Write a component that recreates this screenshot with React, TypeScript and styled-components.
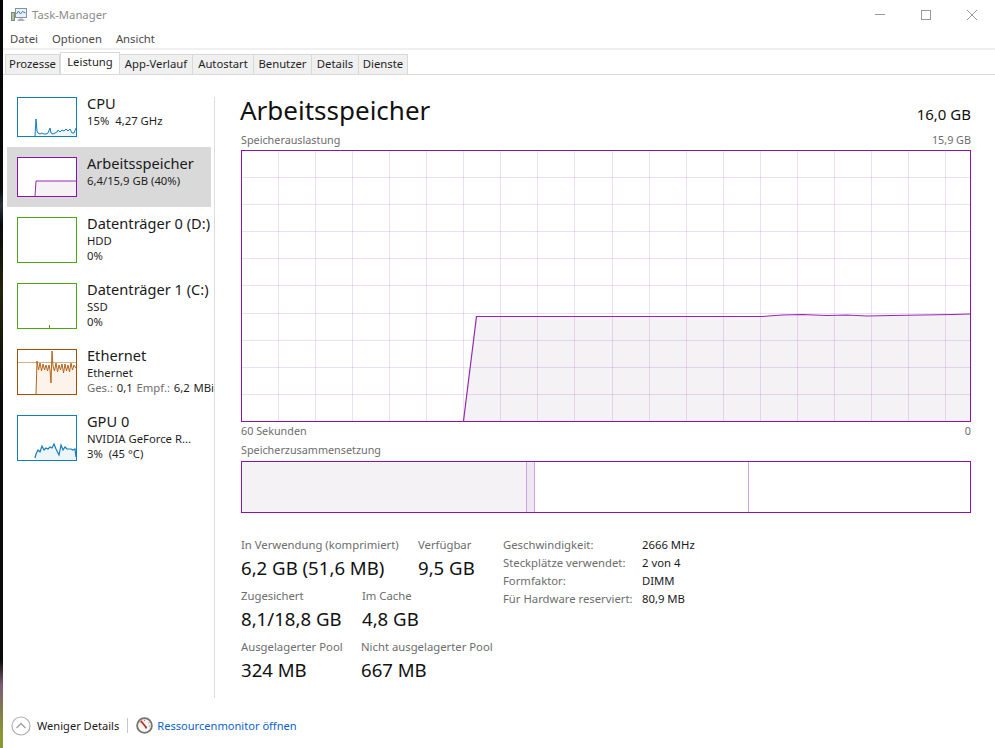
import React from 'react';
import styled, { createGlobalStyle } from 'styled-components';

const GlobalStyle = createGlobalStyle`
  html, body { margin: 0; padding: 0; background: #fff; }
  body { font-family: "Noto Sans", "Open Sans", sans-serif; color: #1a1a1a; }
`;

const Screen = styled.div`
  display: flex;
  width: 995px;
  height: 748px;
  overflow: hidden;
`;

const DesktopEdge = styled.div`
  width: 3px;
  flex: none;
  background: linear-gradient(180deg, #050505 0, #0a0a0a 190px, #26343a 205px, #0a0a0a 225px, #23240c 290px, #0a0a0a 400px, #0a0a0a 660px, #7d5a70 685px, #8a9a30 735px);
`;

const Window = styled.div`
  flex: 1;
  display: flex;
  flex-direction: column;
  min-width: 0;
`;

const TitleBar = styled.div`
  height: 30px;
  display: flex;
  align-items: center;
  padding-left: 8px;
  font-size: 11.3px;
  color: #8c8c8c;
`;

const AppName = styled.span`
  margin-left: 5px;
  margin-bottom: 2px;
  flex: 1;
`;

const WinButton = styled.div`
  width: 46px;
  height: 30px;
  display: flex;
  align-items: center;
  justify-content: center;
`;

const MenuBar = styled.div`
  height: 18px;
  box-sizing: content-box;
  display: flex;
  align-items: flex-start;
  gap: 14px;
  padding-left: 7px;
  font-size: 11.3px;
  line-height: 17px;
  color: #4a4a4a;
  border-bottom: 2px solid #f0f0f0;
`;

const TabStrip = styled.div`
  height: 24px;
  display: flex;
  align-items: flex-end;
  padding-left: 2px;
  border-bottom: 1px solid #d9d9d9;
`;

const Tab = styled.div<{ $w: number; $active?: boolean }>`
  width: ${p => p.$w}px;
  height: ${p => (p.$active ? 22 : 20)}px;
  box-sizing: border-box;
  display: flex;
  align-items: center;
  justify-content: center;
  font-size: 11.3px;
  color: #1f1f1f;
  background: ${p => (p.$active ? '#fff' : '#f0f0f0')};
  border: 1px solid #d9d9d9;
  border-left-width: ${p => (p.$active ? 1 : 0)}px;
  border-bottom: none;
  padding-bottom: ${p => (p.$active ? 5 : 2)}px;
`;

const FirstTab = styled(Tab)`
  border-left-width: 1px;
`;

const Body = styled.div`
  height: 630px;
  display: flex;
`;

const SideList = styled.div`
  width: 211px;
  flex: none;
  box-sizing: border-box;
  padding: 12px 0 0 4px;
  overflow: hidden;
`;

const SideItem = styled.div<{ $h: number; $selected?: boolean }>`
  width: 204px;
  height: ${p => p.$h}px;
  display: flex;
  gap: 10px;
  box-sizing: border-box;
  padding: 10px 0 0 10px;
  white-space: nowrap;
  background: ${p => (p.$selected ? '#d9d9d9' : 'transparent')};
`;

const Thumb = styled.div<{ $h: number; $color: string }>`
  width: 60px;
  height: ${p => p.$h}px;
  flex: none;
  box-sizing: border-box;
  border: 1px solid ${p => p.$color};
  background: #fff;
  svg { display: block; }
`;

const SideText = styled.div`
  display: flex;
  flex-direction: column;
  margin-top: -2px;
`;

const SideName = styled.div`
  font-size: 14.6px;
  line-height: 17px;
  color: #1a1a1a;
  margin-bottom: 1px;
`;

const SideSub = styled.div`
  font-size: 11.3px;
  line-height: 15px;
  color: #1f1f1f;
`;

const NetRates = styled(SideSub)`
  word-spacing: 0.8px;
`;

const Muted = styled.span`
  color: #6d6d6d;
`;

const SideRule = styled.div`
  width: 1px;
  height: 601px;
  margin-top: 22px;
  flex: none;
  background: #dcdcdc;
`;

const Main = styled.div`
  flex: 1;
  min-width: 0;
  padding: 0 24px 0 26px;
  display: flex;
  flex-direction: column;
`;

const Header = styled.div`
  height: 56px;
  display: flex;
  justify-content: space-between;
  align-items: center;
  padding-top: 13px;
  box-sizing: border-box;
  margin-left: -1px;
`;

const Heading = styled.div`
  font-size: 26px;
  color: #111;
`;

const Capacity = styled.div`
  font-size: 15px;
  color: #111;
  padding-top: 9px;
`;

const CaptionRow = styled.div<{ $h: number }>`
  height: ${p => p.$h}px;
  display: flex;
  justify-content: space-between;
  align-items: center;
  box-sizing: border-box;
  padding-bottom: 2px;
  font-size: 10.8px;
  color: #6d6d6d;
`;

const ChartBox = styled.div`
  width: 730px;
  height: 272px;
  box-sizing: border-box;
  border: 1px solid #8b12ae;
  svg { display: block; }
`;

const CompositionBar = styled.div`
  width: 730px;
  height: 52px;
  box-sizing: border-box;
  border: 1px solid #8b12ae;
  display: flex;
`;

const Segment = styled.div<{ $w: number; $fill: string; $edge?: boolean }>`
  width: ${p => p.$w}px;
  flex: none;
  box-sizing: border-box;
  background: ${p => p.$fill};
  border-right: ${p => (p.$edge ? '1px solid #cda3dd' : 'none')};
`;

const StatsArea = styled.div`
  display: flex;
  margin-top: 24px;
`;

const StatsLeft = styled.div`
  width: 262px;
  flex: none;
  display: flex;
  flex-direction: column;
`;

const StatsRow = styled.div`
  height: 51px;
  display: flex;
`;

const Stat = styled.div<{ $w: number }>`
  width: ${p => p.$w}px;
  flex: none;
  white-space: nowrap;
`;

const StatLabel = styled.div`
  font-size: 11.3px;
  line-height: 16px;
  color: #6d6d6d;
`;

const StatValue = styled.div`
  font-size: 18.6px;
  line-height: 27px;
  color: #111;
  margin-top: 1px;
`;

const SpecGrid = styled.div`
  display: grid;
  grid-template-columns: 139px auto;
  grid-auto-rows: 18px;
  align-items: center;
  align-content: start;
  height: 72px;
  margin-top: -2px;
  font-size: 11.3px;
  white-space: nowrap;
`;

const SpecLabel = styled.div`
  color: #6d6d6d;
`;

const SpecValue = styled.div`
  color: #1a1a1a;
`;

const Footer = styled.div`
  flex: 1;
  display: flex;
  align-items: center;
  padding-left: 8px;
  font-size: 11.1px;
  color: #1a1a1a;
  padding-bottom: 2px;
`;

const LessLabel = styled.span`
  margin-left: 6px;
`;

const FooterRule = styled.div`
  width: 1px;
  height: 15px;
  margin: 0 8px;
  background: #c8c8c8;
`;

const MonitorLink = styled.span`
  margin-left: 4px;
  color: #0a5fd0;
`;

const TaskIcon = () => (
  <svg width="16" height="14" viewBox="0 0 16 14">
    <rect x="0.5" y="4.5" width="3" height="8" fill="#a8c99a" stroke="#7d8a7a" />
    <rect x="4.5" y="0.5" width="11" height="9" fill="#e8f2fb" stroke="#8a9199" />
    <path d="M5.5 6 L7.5 3 L9.5 6 L11.5 3.5 L14.5 5" fill="none" stroke="#3f7fc4" />
    <path d="M8 10.5h4v1h1.5v1.5h-7v-1.5H8z" fill="#a9adb2" />
  </svg>
);

const MinGlyph = () => (
  <svg width="10" height="10" viewBox="0 0 10 10">
    <path d="M0 4.5h10" stroke="#999" fill="none" />
  </svg>
);

const MaxGlyph = () => (
  <svg width="10" height="10" viewBox="0 0 10 10">
    <rect x="0.5" y="0.5" width="9" height="9" stroke="#999" fill="none" />
  </svg>
);

const CloseGlyph = () => (
  <svg width="10" height="10" viewBox="0 0 10 10">
    <path d="M0 0l10 10M10 0L0 10" stroke="#999" fill="none" />
  </svg>
);

const CollapseIcon = () => (
  <svg width="20" height="20" viewBox="0 0 20 20">
    <circle cx="10" cy="10" r="9" fill="#fff" stroke="#b0b0b0" strokeWidth="1.2" />
    <path d="M5.5 12 L10 7.5 L14.5 12" fill="none" stroke="#a0a0a0" strokeWidth="1.3" />
  </svg>
);

const GaugeIcon = () => (
  <svg width="17" height="17" viewBox="0 0 17 17">
    <circle cx="8.5" cy="8.5" r="7.4" fill="#f7f5f0" stroke="#77726a" strokeWidth="1.8" />
    <path d="M3.6 5.5 L4.6 6M8.5 2.8v1.2M13.4 5.5 L12.4 6M14 9h-1.2" stroke="#8a8a8a" fill="none" />
    <path d="M4.8 3.8 L10.2 10.6" stroke="#c8201c" strokeWidth="1.6" fill="none" />
    <circle cx="10" cy="10.6" r="1.1" fill="#5a5a5a" />
  </svg>
);

type SparkProps = { h: number; line: string; fill: string; points: string; weight?: number };

// thumbnails have a 58px wide inner area
const Spark = ({ h, line, fill, points, weight = 1 }: SparkProps) => (
  <svg width="58" height={h} viewBox={`0 0 58 ${h}`}>
    <polygon points={`${points} 58,${h} 17,${h}`} fill={fill} />
    <polyline points={points} fill="none" stroke={line} strokeWidth={weight} />
  </svg>
);

const cpuPoints =
  '17,38 18,21 19,33 20,35 22,36 24,35 26,36 28,36 30,35 32,30 33,35 35,36 37,35 39,34 40,32 42,34 44,32 46,33 48,31 50,33 52,31 54,35 56,35 58,30';
const gpuPoints =
  '17,42 18,38 20,34 22,36 24,30 26,34 28,32 30,33 32,31 34,32 36,28 38,33 40,37 41,39 43,29 45,34 47,31 49,33 51,33 53,33 55,34 57,33 58,41';
const netPoints =
  '18,44 19,11 20.5,20 22,13 23.5,21 25,14 26.5,20 28,15 29.5,21 31,15 32,20 33,33 34,1 35,16 36.5,21 38,13 39.5,22 41,15 42.5,20 44,14 45.5,23 47,14 48.5,21 50,15 51.5,22 53,13 54.5,20 56,15 58,18';

const CHART_W = 728;
const CHART_H = 270;
const vGrid = Array.from({ length: 19 }, (_, i) => Math.round(36 + i * 37.06) + 0.5);
const hGrid = Array.from({ length: 9 }, (_, i) => Math.round(26 + i * 27.1) + 0.5);
const usage =
  '221.5,270 234.5,165.5 520,165.5 540,164 560,163.5 585,164.5 605,164 625,165 650,164.5 680,164 710,163.5 728,163';

const MemoryChart = () => (
  <svg width={CHART_W} height={CHART_H} viewBox={`0 0 ${CHART_W} ${CHART_H}`}>
    <polygon points={`${usage} 728,270`} fill="#f4f2f5" />
    {vGrid.map(x => (
      <path key={x} d={`M${x} 0V${CHART_H}`} stroke="rgba(139,18,174,.14)" />
    ))}
    {hGrid.map(y => (
      <path key={y} d={`M0 ${y}H${CHART_W}`} stroke="rgba(139,18,174,.14)" />
    ))}
    <polyline points={usage} fill="none" stroke="#9528b4" strokeWidth="1.2" />
  </svg>
);

const App: React.FC = () => {
  return (
    <Screen>
      <GlobalStyle />
      <DesktopEdge />
      <Window>
        <TitleBar>
          <TaskIcon />
          <AppName>Task-Manager</AppName>
          <WinButton><MinGlyph /></WinButton>
          <WinButton><MaxGlyph /></WinButton>
          <WinButton><CloseGlyph /></WinButton>
        </TitleBar>
        <MenuBar>
          <span>Datei</span>
          <span>Optionen</span>
          <span>Ansicht</span>
        </MenuBar>
        <TabStrip>
          <FirstTab $w={55}>Prozesse</FirstTab>
          <Tab $w={60} $active>Leistung</Tab>
          <Tab $w={73}>App-Verlauf</Tab>
          <Tab $w={61}>Autostart</Tab>
          <Tab $w={58}>Benutzer</Tab>
          <Tab $w={47}>Details</Tab>
          <Tab $w={49}>Dienste</Tab>
        </TabStrip>
        <Body>
          <SideList>
            <SideItem $h={60}>
              <Thumb $h={40} $color="#117dbb">
                <Spark h={38} line="#117dbb" fill="#f1f6fa" points={cpuPoints} />
              </Thumb>
              <SideText>
                <SideName>CPU</SideName>
                <SideSub>15%&nbsp; 4,27 GHz</SideSub>
              </SideText>
            </SideItem>
            <SideItem $h={60} $selected>
              <Thumb $h={40} $color="#8b12ae">
                <Spark h={38} line="#9528b4" fill="#f4f2f5" points="17,38 18,23 58,23" />
              </Thumb>
              <SideText>
                <SideName>Arbeitsspeicher</SideName>
                <SideSub>6,4/15,9 GB (40%)</SideSub>
              </SideText>
            </SideItem>
            <SideItem $h={66}>
              <Thumb $h={46} $color="#4da60c" />
              <SideText>
                <SideName>Datenträger 0 (D:)</SideName>
                <SideSub>HDD</SideSub>
                <SideSub>0%</SideSub>
              </SideText>
            </SideItem>
            <SideItem $h={66}>
              <Thumb $h={46} $color="#4da60c">
                <svg width="58" height="44" viewBox="0 0 58 44">
                  <path d="M31.5 41v3" stroke="#4da60c" fill="none" />
                </svg>
              </Thumb>
              <SideText>
                <SideName>Datenträger 1 (C:)</SideName>
                <SideSub>SSD</SideSub>
                <SideSub>0%</SideSub>
              </SideText>
            </SideItem>
            <SideItem $h={66}>
              <Thumb $h={46} $color="#a74f01">
                <svg width="58" height="44" viewBox="0 0 58 44">
                  <polygon points={`${netPoints} 58,44 18,44`} fill="#fcf3eb" />
                  <path d="M0 12.5H58" stroke="#d8ae88" fill="none" />
                  <polyline points={netPoints} fill="none" stroke="#b5651d" strokeWidth="1" />
                </svg>
              </Thumb>
              <SideText>
                <SideName>Ethernet</SideName>
                <SideSub>Ethernet</SideSub>
                <NetRates><Muted>Ges.:</Muted> 0,1 <Muted>Empf.:</Muted> 6,2 MBit/s</NetRates>
              </SideText>
            </SideItem>
            <SideItem $h={66}>
              <Thumb $h={46} $color="#117dbb">
                <Spark h={44} line="#117dbb" fill="#eef5fa" points={gpuPoints} weight={1.2} />
              </Thumb>
              <SideText>
                <SideName>GPU 0</SideName>
                <SideSub>NVIDIA GeForce R...</SideSub>
                <SideSub>3%&nbsp; (45 °C)</SideSub>
              </SideText>
            </SideItem>
          </SideList>
          <SideRule />
          <Main>
            <Header>
              <Heading>Arbeitsspeicher</Heading>
              <Capacity>16,0 GB</Capacity>
            </Header>
            <CaptionRow $h={19}>
              <span>Speicherauslastung</span>
              <span>15,9 GB</span>
            </CaptionRow>
            <ChartBox>
              <MemoryChart />
            </ChartBox>
            <CaptionRow $h={18}>
              <span>60 Sekunden</span>
              <span>0</span>
            </CaptionRow>
            <CaptionRow $h={21}>
              <span>Speicherzusammensetzung</span>
            </CaptionRow>
            <CompositionBar>
              <Segment $w={285} $fill="#f4f2f5" $edge />
              <Segment $w={8} $fill="#efe7f3" $edge />
              <Segment $w={214} $fill="#fff" $edge />
            </CompositionBar>
            <StatsArea>
              <StatsLeft>
                <StatsRow>
                  <Stat $w={177}>
                    <StatLabel>In Verwendung (komprimiert)</StatLabel>
                    <StatValue>6,2 GB (51,6 MB)</StatValue>
                  </Stat>
                  <Stat $w={85}>
                    <StatLabel>Verfügbar</StatLabel>
                    <StatValue>9,5 GB</StatValue>
                  </Stat>
                </StatsRow>
                <StatsRow>
                  <Stat $w={121}>
                    <StatLabel>Zugesichert</StatLabel>
                    <StatValue>8,1/18,8 GB</StatValue>
                  </Stat>
                  <Stat $w={141}>
                    <StatLabel>Im Cache</StatLabel>
                    <StatValue>4,8 GB</StatValue>
                  </Stat>
                </StatsRow>
                <StatsRow>
                  <Stat $w={120}>
                    <StatLabel>Ausgelagerter Pool</StatLabel>
                    <StatValue>324 MB</StatValue>
                  </Stat>
                  <Stat $w={142}>
                    <StatLabel>Nicht ausgelagerter Pool</StatLabel>
                    <StatValue>667 MB</StatValue>
                  </Stat>
                </StatsRow>
              </StatsLeft>
              <SpecGrid>
                <SpecLabel>Geschwindigkeit:</SpecLabel>
                <SpecValue>2666 MHz</SpecValue>
                <SpecLabel>Steckplätze verwendet:</SpecLabel>
                <SpecValue>2 von 4</SpecValue>
                <SpecLabel>Formfaktor:</SpecLabel>
                <SpecValue>DIMM</SpecValue>
                <SpecLabel>Für Hardware reserviert:</SpecLabel>
                <SpecValue>80,9 MB</SpecValue>
              </SpecGrid>
            </StatsArea>
          </Main>
        </Body>
        <Footer>
          <CollapseIcon />
          <LessLabel>Weniger Details</LessLabel>
          <FooterRule />
          <GaugeIcon />
          <MonitorLink>Ressourcenmonitor öffnen</MonitorLink>
        </Footer>
      </Window>
    </Screen>
  );
};

export default App;
